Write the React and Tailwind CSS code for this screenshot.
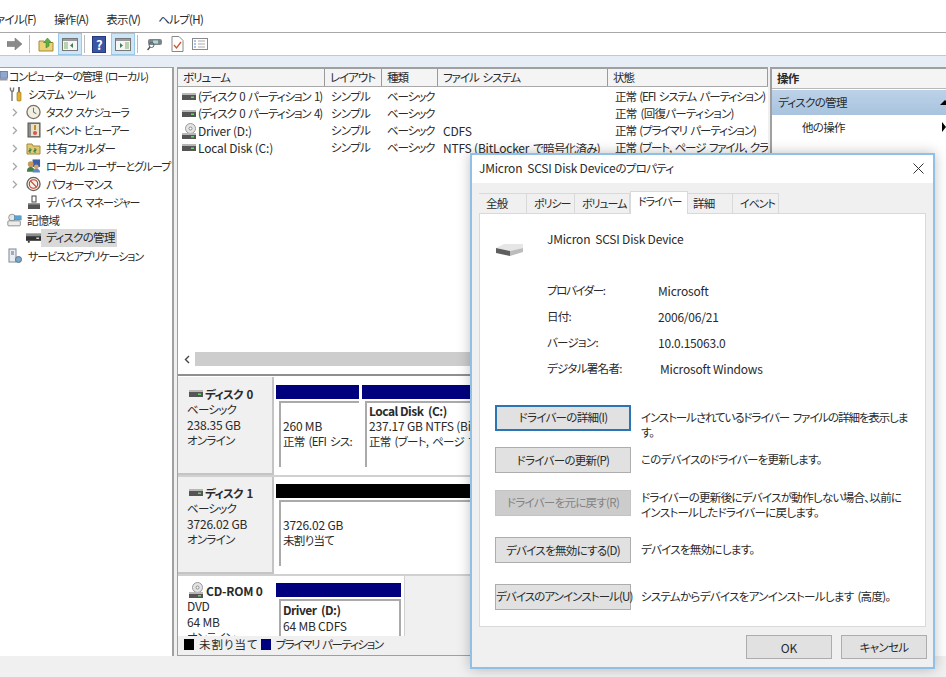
import React from "react";

const FONT = "font-['Noto_Sans_CJK_JP','Noto_Sans',sans-serif] [font-feature-settings:'palt'] text-[11.5px] leading-[17px] text-[#2a2a2a] tracking-[-0.7px] [word-spacing:2px]";

// katakana runs are much narrower in the original font
const KANA = "text-[11px] tracking-[-1.1px]";

// latin text keeps its natural width, only the kana are squeezed
const L = ({ children }) => <span className="text-[12px] tracking-[-0.2px] [word-spacing:0] whitespace-pre">{children}</span>;

const DiskIcon = () => (
    <svg width="14" height="8" viewBox="0 0 14 8" className="shrink-0">
        <rect x="0" y="0" width="14" height="2" fill="#b8b8b8" />
        <rect x="0" y="2" width="14" height="5" fill="#555" />
        <rect x="9" y="3.500" width="3" height="1.500" fill="#6fd06f" />
    </svg>
);

const CdDiskIcon = () => (
    <svg width="15" height="16" viewBox="0 0 15 16" className="shrink-0">
        <circle cx="8.500" cy="5.500" r="5" fill="#e4e4e4" stroke="#999" />
        <circle cx="8.500" cy="5.500" r="1.500" fill="#fff" stroke="#888" />
        <rect x="0" y="10" width="14" height="2" fill="#b8b8b8" />
        <rect x="0" y="12" width="14" height="4" fill="#555" />
        <rect x="9" y="13" width="3" height="1.500" fill="#6fd06f" />
    </svg>
);

const Chevron = () => (
    <svg width="6" height="9" viewBox="0 0 6 9" className="shrink-0">
        <path d="M1 1l3.500 3.500L1 8" fill="none" stroke="#a6a6a6" strokeWidth="1.300" />
    </svg>
);

const treeIcons = {
    root: (
        <svg width="12" height="14" viewBox="0 0 12 14">
            <rect x="0" y="1" width="10" height="9" fill="#8fa8cf" stroke="#5a6d8e" />
            <rect x="0" y="11" width="10" height="2" fill="#9a9a9a" />
        </svg>
    ),
    tools: (
        <svg width="14" height="16" viewBox="0 0 14 16">
            <path d="M1.500 1.500C1 4 2 5 3 5.500s2-1.500 1.500-4M3 6v9" fill="none" stroke="#777" strokeWidth="1.400" />
            <path d="M10 1v5" stroke="#777" strokeWidth="2" />
            <rect x="8" y="6" width="4" height="9" rx="1" fill="#e3b12f" stroke="#8d6b10" strokeWidth="0.600" />
        </svg>
    ),
    clock: (
        <svg width="16" height="16" viewBox="0 0 16 16">
            <circle cx="8" cy="8" r="7" fill="#f2efe2" stroke="#77736a" strokeWidth="1.400" />
            <path d="M8 3.500V8l3 2" fill="none" stroke="#777" strokeWidth="1.100" />
        </svg>
    ),
    event: (
        <svg width="14" height="16" viewBox="0 0 14 16">
            <rect x="1" y="1" width="12" height="14" fill="#8c8f8a" stroke="#555" />
            <rect x="4" y="2" width="8" height="12" fill="#e8e2c8" />
            <path d="M8 3v5" stroke="#c98a1f" strokeWidth="2" />
            <circle cx="8" cy="11" r="2" fill="#d9534f" />
        </svg>
    ),
    share: (
        <svg width="15" height="14" viewBox="0 0 15 14">
            <path d="M1 3h5l1 2h7v8H1z" fill="#e2c873" stroke="#a48a3c" />
            <path d="M3 8h2v1.500H3v1.500h2M8 8h2v1.500H8v1.500h2" fill="none" stroke="#2f7d46" />
        </svg>
    ),
    users: (
        <svg width="16" height="16" viewBox="0 0 16 16">
            <rect x="7" y="1" width="8" height="8" fill="#3c5fa8" />
            <circle cx="5" cy="6" r="3" fill="#c79a5b" />
            <path d="M1 14c0-4 2-5 4-5s4 1 4 5z" fill="#3f7f4a" />
            <circle cx="11" cy="9" r="2.500" fill="#d1a86e" />
            <path d="M7 15c0-3 2-4 4-4s4 1 4 4z" fill="#5e88c7" />
        </svg>
    ),
    perf: (
        <svg width="16" height="16" viewBox="0 0 16 16">
            <circle cx="8" cy="8" r="7" fill="#f4f1e6" stroke="#66625a" strokeWidth="1.400" />
            <circle cx="8" cy="8" r="4.500" fill="none" stroke="#c53a32" strokeWidth="1.200" />
            <path d="M5 5l6 6" stroke="#c53a32" strokeWidth="1.200" />
        </svg>
    ),
    device: (
        <svg width="14" height="15" viewBox="0 0 14 15">
            <rect x="5" y="1" width="4" height="6" fill="#fff" stroke="#444" />
            <rect x="1" y="8" width="12" height="6" fill="#555" />
            <rect x="1" y="8" width="12" height="1.500" fill="#999" />
        </svg>
    ),
    storage: (
        <svg width="18" height="16" viewBox="0 0 18 16">
            <circle cx="6" cy="5" r="4" fill="#e6e6e6" stroke="#8a8a8a" />
            <rect x="9" y="3" width="8" height="5" fill="#5ba4d6" stroke="#3b7ea9" strokeWidth="0.600" />
            <rect x="1" y="9" width="15" height="6" rx="1" fill="#ececec" stroke="#808080" />
        </svg>
    ),
    diskMgmt: (
        <svg width="16" height="10" viewBox="0 0 16 10">
            <rect x="0" y="0" width="16" height="3" fill="#8d8d8d" />
            <rect x="0" y="3" width="16" height="5" fill="#333" />
            <rect x="2" y="8" width="2" height="2" fill="#333" />
            <rect x="11" y="4.500" width="3" height="1.500" fill="#ddd" />
        </svg>
    ),
    services: (
        <svg width="15" height="16" viewBox="0 0 15 16">
            <rect x="1" y="1" width="7" height="13" fill="#e8edf3" stroke="#7a8796" />
            <path d="M3 4h3M3 6h3" stroke="#667" />
            <circle cx="10.500" cy="11.500" r="3" fill="#7fa5c7" stroke="#4f7393" />
        </svg>
    ),
};

const Tree = () => {
    const rows = [
        { pad: "pl-0", icon: "root", label: "コンピューターの管理 (ローカル)", clip: true, kana: true },
        { pad: "pl-[8px]", icon: "tools", label: "システム ツール", kana: true },
        { pad: "pl-[12px]", icon: "clock", label: "タスク スケジューラ", chevron: true, kana: true },
        { pad: "pl-[12px]", icon: "event", label: "イベント ビューアー", chevron: true, kana: true },
        { pad: "pl-[12px]", icon: "share", label: "共有フォルダー", chevron: true },
        { pad: "pl-[12px]", icon: "users", label: "ローカル ユーザーとグループ", chevron: true, kana: true },
        { pad: "pl-[12px]", icon: "perf", label: "パフォーマンス", chevron: true },
        { pad: "pl-[26px]", icon: "device", label: "デバイス マネージャー", kana: true },
        { pad: "pl-[7px]", icon: "storage", label: "記憶域" },
        { pad: "pl-[26px]", icon: "diskMgmt", label: "ディスクの管理", selected: true },
        { pad: "pl-[8px]", icon: "services", label: "サービスとアプリケーション", kana: true },
    ];

    return (
        <div className="w-[174px] shrink-0 border-r-2 border-t border-[#a0a0a0] bg-white overflow-hidden">
            <div className="mt-[-1px]">
                {rows.map((r) => (
                    <div key={r.label} className={`flex items-center h-[18px] whitespace-nowrap ${r.pad}`}>
                        {r.chevron && <span className="w-[8px] mr-[6px] flex shrink-0"><Chevron /></span>}
                        <span className={r.clip ? "w-[9px] overflow-hidden flex justify-end shrink-0" : "mr-[5px] flex items-center justify-center w-[15px] shrink-0"}>
                            {treeIcons[r.icon]}
                        </span>
                        <span className={`${r.selected ? "bg-[#d9d9d9] h-[18px] pr-[2px] pl-[5px] ml-[-5px]" : ""} ${r.kana ? KANA : ""}`}>{r.label}</span>
                    </div>
                ))}
            </div>
        </div>
    );
};

const columns = ["ボリューム", "レイアウト", "種類", "ファイル システム", "状態"];

const ROW_TIGHT = "tracking-[-1.1px]";

const volumes = [
    { icon: <DiskIcon />, name: <span className={ROW_TIGHT}>(ディスク 0 パーティション 1)</span>, fs: "", status: <span className={ROW_TIGHT}>正常 (EFI システム パーティション)</span> },
    { icon: <DiskIcon />, name: <span className={ROW_TIGHT}>(ディスク 0 パーティション 4)</span>, fs: "", status: "正常 (回復パーティション)" },
    { icon: <CdDiskIcon />, name: <L>Driver (D:)</L>, fs: <L>CDFS</L>, status: <span className={ROW_TIGHT}>正常 (プライマリ パーティション)</span> },
    { icon: <DiskIcon />, name: <L>Local Disk (C:)</L>, fs: <><L>NTFS (BitLocker</L> で暗号化済み)</>, status: <span className={ROW_TIGHT}>正常 (ブート, ページ ファイル, クラッシュ ダンプ)</span> },
];

const GRID = "grid grid-cols-[147px_57px_56px_170px_160px]";

const VolumeTable = () => (
    <div className="h-[305px] shrink-0 flex flex-col overflow-hidden">
        <div className={`${GRID} h-[18px] border-b border-[#a8a8a8] bg-[#f4f4f4]`}>
            {columns.map((c) => (
                <div key={c} className="pl-[5px] border-r border-[#9a9a9a] whitespace-nowrap leading-[17px] tracking-[-1px]">{c}</div>
            ))}
        </div>
        <div className="flex-1 pt-[1px]">
            {volumes.map((v, i) => (
                <div key={i} className={`${GRID} h-[17px] whitespace-nowrap`}>
                    <div className="flex items-center gap-[2px] pl-[4px] overflow-hidden">
                        <span className="w-[14px] flex justify-center shrink-0">{v.icon}</span>
                        <span>{v.name}</span>
                    </div>
                    <div className="pl-[6px]">シンプル</div>
                    <div className="pl-[5px] tracking-[-1.1px]">ベーシック</div>
                    <div className="pl-[5px] overflow-hidden">{v.fs}</div>
                    <div className="pl-[7px] overflow-hidden">{v.status}</div>
                </div>
            ))}
        </div>
        <div className="h-[14px] mb-[8px] flex items-center shrink-0">
            <span className="w-[17px] flex justify-center">
                <svg width="6" height="9" viewBox="0 0 6 9">
                    <path d="M5 1L1.500 4.500 5 8" fill="none" stroke="#444" strokeWidth="1.400" />
                </svg>
            </span>
            <div className="flex-1 h-[14px] bg-[#cdcdcd]" />
        </div>
    </div>
);

const Partition = ({ bar, title, size, status, className }) => (
    <div className={`flex flex-col ${className}`}>
        <div className={`h-[14px] shrink-0 ${bar}`} />
        <div className="mt-[2px] flex-1 border-l-2 border-t-2 border-[#aaa] bg-white ml-[3px] pl-[2px] whitespace-nowrap overflow-hidden min-h-0 leading-[15px]">
            <div className="h-[15px] font-semibold">{title}</div>
            <div>{size}</div>
            <div>{status}</div>
        </div>
    </div>
);

const DiskLabel = ({ icon, name, type, size, state, white, top }) => (
    <div className={`w-[96px] shrink-0 pl-[9px] leading-[15px] ${top} ${white ? "bg-white" : "bg-[#f0f0f0] border-r-2 border-b-2 border-[#c4c4c4]"}`}>
        <div className="flex items-center gap-[2px] h-[16px] ml-[2px] font-semibold whitespace-nowrap">
            {icon}
            {name}
        </div>
        <div>{type}</div>
        <div>{size}</div>
        <div>{state}</div>
    </div>
);

const BoldLatin = ({ children }) => <span className="text-[12px] tracking-[-0.5px] whitespace-pre [word-spacing:0]">{children}</span>;

const DiskPane = () => (
    <div className="flex-1 min-h-0 border-t-2 border-[#8f8f8f] flex flex-col bg-white overflow-hidden">
        <div className="h-[101px] flex pt-[1px] shrink-0 border-b-2 border-[#d0d0d0]">
            <DiskLabel top="pt-[9px]" icon={<DiskIcon />} name="ディスク 0" type="ベーシック" size={<L>238.35 GB</L>} state="オンライン" />
            <div className="flex flex-1 pt-[8px] pb-[8px] pl-[2px] gap-[3px]">
                <Partition className="w-[83px]" bar="bg-[#00007f]" size={<L>260 MB</L>} status="正常 (EFI シス:" />
                <Partition className="flex-1" bar="bg-[#00007f]" title={<BoldLatin>Local Disk  (C:)</BoldLatin>} size={<L>237.17 GB NTFS (BitLocker)</L>} status="正常 (ブート, ページ ファイル)" />
            </div>
        </div>
        <div className="h-[99px] flex shrink-0 border-b-2 border-[#d0d0d0]">
            <DiskLabel top="pt-[8px]" icon={<DiskIcon />} name="ディスク 1" type="ベーシック" size={<L>3726.02 GB</L>} state="オンライン" />
            <div className="flex flex-1 pt-[7px] pb-[8px] pl-[2px]">
                <Partition className="flex-1" bar="bg-black" size={<L>3726.02 GB</L>} status="未割り当て" />
            </div>
        </div>
        <div className="flex-1 min-h-0 flex overflow-hidden bg-[#f0f0f0]">
            <DiskLabel white top="pt-[6px]" icon={<CdDiskIcon />} name={<L>CD-ROM 0</L>} type={<L>DVD</L>} size={<L>64 MB</L>} state="オンライン" />
            <div className="w-[131px] pt-[7px] pl-[2px] pr-[3px] leading-[15px] bg-white border-r border-[#d0d0d0]">
                <div className="h-[14px] bg-[#00007f]" />
                <div className="mt-[2px] ml-[3px] pl-[2px] pt-[1px] border-l-2 border-t-2 border-r-2 border-[#aaa] whitespace-nowrap overflow-hidden">
                    <div className="font-semibold"><BoldLatin>Driver  (D:)</BoldLatin></div>
                    <div><L>64 MB CDFS</L></div>
                    <div>正常 (プライマリ パーティ</div>
                </div>
            </div>
        </div>
        <div className="h-[20px] shrink-0 bg-[#f0f0f0] flex items-center pl-[6px] pb-[2px] border-b border-[#a0a0a0] whitespace-nowrap">
            <span className="w-[10px] h-[11px] bg-black mr-[5px] shrink-0" />
            <span className="mr-[2px] tracking-[1px]">未割り当て</span>
            <span className="w-[10px] h-[11px] bg-[#00007f] mr-[5px] shrink-0" />
            <span className="tracking-[-1.4px]">プライマリ パーティション</span>
        </div>
    </div>
);

const ActionsPane = () => (
    <div className="flex-1 ml-[2px] border-t-2 border-l-2 border-[#a0a0a0] bg-white overflow-hidden">
        <div className="h-[20px] bg-[#f4f4f4] pl-[5px] border-b border-[#b8b8b8] font-semibold leading-[19px]">操作</div>
        <div className="h-[25px] mt-[1px] pl-[6px] pb-[1px] flex items-center justify-between bg-gradient-to-b from-[#bcd2e8] to-[#a9c3de]">
            ディスクの管理
            <span className="w-0 h-0 border-l-[5px] border-r-[5px] border-b-[5px] border-transparent border-b-black mr-[-4px]" />
        </div>
        <div className="h-[24px] pl-[30px] flex items-center justify-between">
            他の操作
            <span className="w-0 h-0 border-t-[5px] border-b-[5px] border-l-[4px] border-transparent border-l-black" />
        </div>
    </div>
);

const Toolbar = () => (
    <div className="h-[23px] bg-white border-b border-[#c8c8c8] flex items-center pl-[7px]">
        <svg width="16" height="12" viewBox="0 0 16 12">
            <path d="M0 3.500h8V0l7 6-7 6V8.500H0z" fill="#8a8a8a" stroke="#6d6d6d" strokeWidth="0.500" />
        </svg>
        <span className="w-px h-[18px] bg-[#bbb] ml-[6px] mr-[8px]" />
        <svg width="16" height="15" viewBox="0 0 16 15">
            <path d="M1 4h5l1 1.500h8V14H1z" fill="#ecd27a" stroke="#a88a35" />
            <path d="M8 11V5.500H5.500L9.500 1l4 4.500H11V9z" fill="#5fae3f" stroke="#3f7d2a" strokeWidth="0.500" />
        </svg>
        <span className="ml-[4px] w-[24px] h-[22px] bg-[#cde6f7] border border-[#9bc9e8] flex items-center justify-center">
            <svg width="16" height="13" viewBox="0 0 16 13">
                <rect x="0.500" y="0.500" width="15" height="12" fill="#f6f6f6" stroke="#777" />
                <rect x="1" y="1" width="14" height="2" fill="#999" />
                <rect x="2" y="4" width="4" height="7" fill="#b8d2b0" />
                <path d="M11 5v5L8 7.500z" fill="#3f7d5a" />
            </svg>
        </span>
        <span className="w-px h-[18px] bg-[#bbb] ml-[2px] mr-[7px]" />
        <span className="w-[14px] h-[17px] bg-[#3b55a5] border border-[#24387a] text-white text-[13px] leading-[15px] text-center font-bold">?</span>
        <span className="ml-[5px] w-[24px] h-[22px] bg-[#cde6f7] border border-[#9bc9e8] flex items-center justify-center">
            <svg width="16" height="13" viewBox="0 0 16 13">
                <rect x="0.500" y="0.500" width="15" height="12" fill="#f6f6f6" stroke="#777" />
                <rect x="1" y="1" width="14" height="2" fill="#999" />
                <rect x="10" y="4" width="4" height="7" fill="#b8d2b0" />
                <path d="M5 5v5l3-2.500z" fill="#3f7d5a" />
            </svg>
        </span>
        <span className="w-px h-[18px] bg-[#bbb] ml-[2px] mr-[9px]" />
        <svg width="15" height="13" viewBox="0 0 15 13">
            <rect x="1" y="1" width="14" height="6" rx="2" fill="#7b868c" />
            <rect x="6" y="2.500" width="5" height="3" fill="#a9dcd8" />
            <circle cx="4.500" cy="7" r="2.500" fill="none" stroke="#5b6468" />
            <path d="M3 9l-2.500 3" stroke="#555" strokeWidth="1.500" />
        </svg>
        <span className="ml-[9px] flex">
            <svg width="13" height="16" viewBox="0 0 13 16">
                <path d="M1 .5h7l4 4v11H1z" fill="#fff" stroke="#888" />
                <path d="M3 9l2.500 3L10 6" fill="none" stroke="#d2542f" strokeWidth="1.300" />
            </svg>
        </span>
        <span className="ml-[8px] flex">
            <svg width="16" height="12" viewBox="0 0 16 12">
                <rect x="0.500" y="0.500" width="15" height="11" fill="#fff" stroke="#8a8a8a" />
                <path d="M2 3h2M2 6h2M2 9h2" stroke="#4d8fd0" />
                <path d="M6 3h7M6 6h7M6 9h7" stroke="#aaa" />
            </svg>
        </span>
    </div>
);

const BTN = "h-[26px] w-[136px] shrink-0 text-center whitespace-nowrap";

const driverActions = [
    { label: "ドライバーの詳細(I)", text: "インストールされているドライバー ファイルの詳細を表示します。", look: "border-2 border-[#2b75b5] bg-[#e1e1e1] leading-[20px]", mt: "mt-[28px]", pt: "pt-[5px] tracking-[-1.1px]" },
    { label: "ドライバーの更新(P)", text: "このデバイスのドライバーを更新します。", look: "border border-[#adadad] bg-[#e1e1e1] leading-[24px]", mt: "mt-[16px]", pt: "pt-[5px]" },
    { label: "ドライバーを元に戻す(R)", text: "ドライバーの更新後にデバイスが動作しない場合、以前にインストールしたドライバーに戻します。", look: "border border-[#c4c4c4] bg-[#cccccc] text-[#838383] leading-[23px]", mt: "mt-[17px]", pt: "pt-[0px]" },
    { label: "デバイスを無効にする(D)", text: "デバイスを無効にします。", look: "border border-[#adadad] bg-[#e1e1e1] leading-[24px]", mt: "mt-[21px]", pt: "pt-[5px]" },
    { label: "デバイスのアンインストール(U)", text: "システムからデバイスをアンインストールします (高度)。", look: "border border-[#adadad] bg-[#e1e1e1] leading-[23px] tracking-[-0.9px]", mt: "mt-[21px]", pt: "pt-[5px]" },
];

const infoRows = [
    { k: "プロバイダー:", v: <L>Microsoft</L>, tight: "tracking-[-1.4px]" },
    { k: "日付:", v: <L>2006/06/21</L> },
    { k: "バージョン:", v: <L>10.0.15063.0</L> },
    { k: "デジタル署名者:", v: <L>Microsoft Windows</L>, nudge: "pl-[2px]" },
];

const tabs = [
    { label: "全般", w: "w-[48px]" },
    { label: "ポリシー", w: "w-[48px]", kana: true },
    { label: "ボリューム", w: "w-[55px]", kana: true },
    { label: "ドライバー", w: "w-[58px]", active: true, kana: true },
    { label: "詳細", w: "w-[45px]", nudge: "pl-[5px]" },
    { label: "イベント", w: "w-[46px]", kana: true },
];

const PropertiesDialog = () => (
    <div className="absolute left-[470px] top-[153px] w-[465px] h-[516px] border-2 border-[#8fc1e8] bg-[#f0f0f0] shadow-[0_0_12px_rgba(0,0,0,0.25)] flex flex-col">
        <div className="h-[28px] shrink-0 bg-white flex items-center justify-between pl-[7px] pr-[9px] pb-[2px]">
            <span className="whitespace-nowrap"><L>JMicron  SCSI Disk Device</L>のプロパティ</span>
            <svg width="11" height="11" viewBox="0 0 11 11">
                <path d="M.5.5l10 10M10.500.5l-10 10" stroke="#333" strokeWidth="1" />
            </svg>
        </div>
        <div className="flex items-end h-[30px] pl-[7px] shrink-0">
            {tabs.map((t) => (
                <div
                    key={t.label}
                    className={`${t.w} ${t.nudge || "pl-[7px]"} ${t.kana ? KANA : ""} whitespace-nowrap border-t border-r border-[#d9d9d9] ${t.active ? "h-[23px] bg-white border-l mb-[-1px] relative z-10 leading-[18px]" : "h-[20px] bg-[#f0f0f0] leading-[19px]"}`}
                >
                    {t.label}
                </div>
            ))}
        </div>
        <div className="mx-[7px] h-[414px] shrink-0 border border-[#d9d9d9] bg-white px-[15px] pt-[16px]">
            <div className="flex">
                <div className="w-[52px] pt-[13px] shrink-0">
                    <svg width="29" height="15" viewBox="0 0 29 15">
                        <path d="M1 5L9 1h19v4L15 8z" fill="#e6e6e6" />
                        <path d="M15 8l13-3v4l-13 4z" fill="#bcbcbc" />
                        <path d="M1 5l14 3v5L1 10z" fill="#5f5f5f" />
                    </svg>
                </div>
                <div className="leading-[17px]"><L>JMicron  SCSI Disk Device</L></div>
            </div>
            <div className="mt-[24px] pl-[52px] flex flex-col gap-[9px]">
                {infoRows.map((r) => (
                    <div key={r.k} className="flex h-[17px] whitespace-nowrap">
                        <div className={`w-[111px] shrink-0 ${r.tight || ""}`}>{r.k}</div>
                        <div className={r.nudge}>{r.v}</div>
                    </div>
                ))}
            </div>
            {driverActions.map((a) => (
                <div key={a.label} className={`flex gap-[10px] h-[26px] ${a.mt}`}>
                    <div className={`${BTN} ${a.look}`}>{a.label}</div>
                    <div className={`w-[267px] leading-[15px] ${a.pt}`}>{a.text}</div>
                </div>
            ))}
        </div>
        <div className="flex justify-end gap-[9px] pr-[6px] pt-[8px]">
            <div className="w-[86px] h-[24px] border border-[#adadad] bg-[#e1e1e1] text-center leading-[23px]"><L>OK</L></div>
            <div className="w-[86px] h-[24px] border border-[#adadad] bg-[#e1e1e1] text-center leading-[23px]">キャンセル</div>
        </div>
    </div>
);

export default function App() {
    return (
        <div className={`relative w-[946px] h-[677px] overflow-hidden bg-[#f0f0f0] flex flex-col ${FONT}`}>
            <div className="h-[33px] bg-white flex items-center gap-[18px] border-b border-[#a8a8a8] ml-[-13px] pt-[7px] shrink-0 whitespace-nowrap">
                <span>ファイル(F)</span>
                <span>操作(A)</span>
                <span>表示(V)</span>
                <span>ヘルプ(H)</span>
            </div>
            <Toolbar />
            <div className="h-[11px] bg-[#e6edf4] shrink-0" />
            <div className="flex h-[589px] shrink-0">
                <Tree />
                <div className="w-[591px] ml-[3px] shrink-0 flex flex-col border-t-2 border-l border-[#a0a0a0] bg-white">
                    <VolumeTable />
                    <DiskPane />
                </div>
                <ActionsPane />
            </div>
            <div className="flex-1 bg-[#f0f0f0]" />
            <PropertiesDialog />
        </div>
    );
}
